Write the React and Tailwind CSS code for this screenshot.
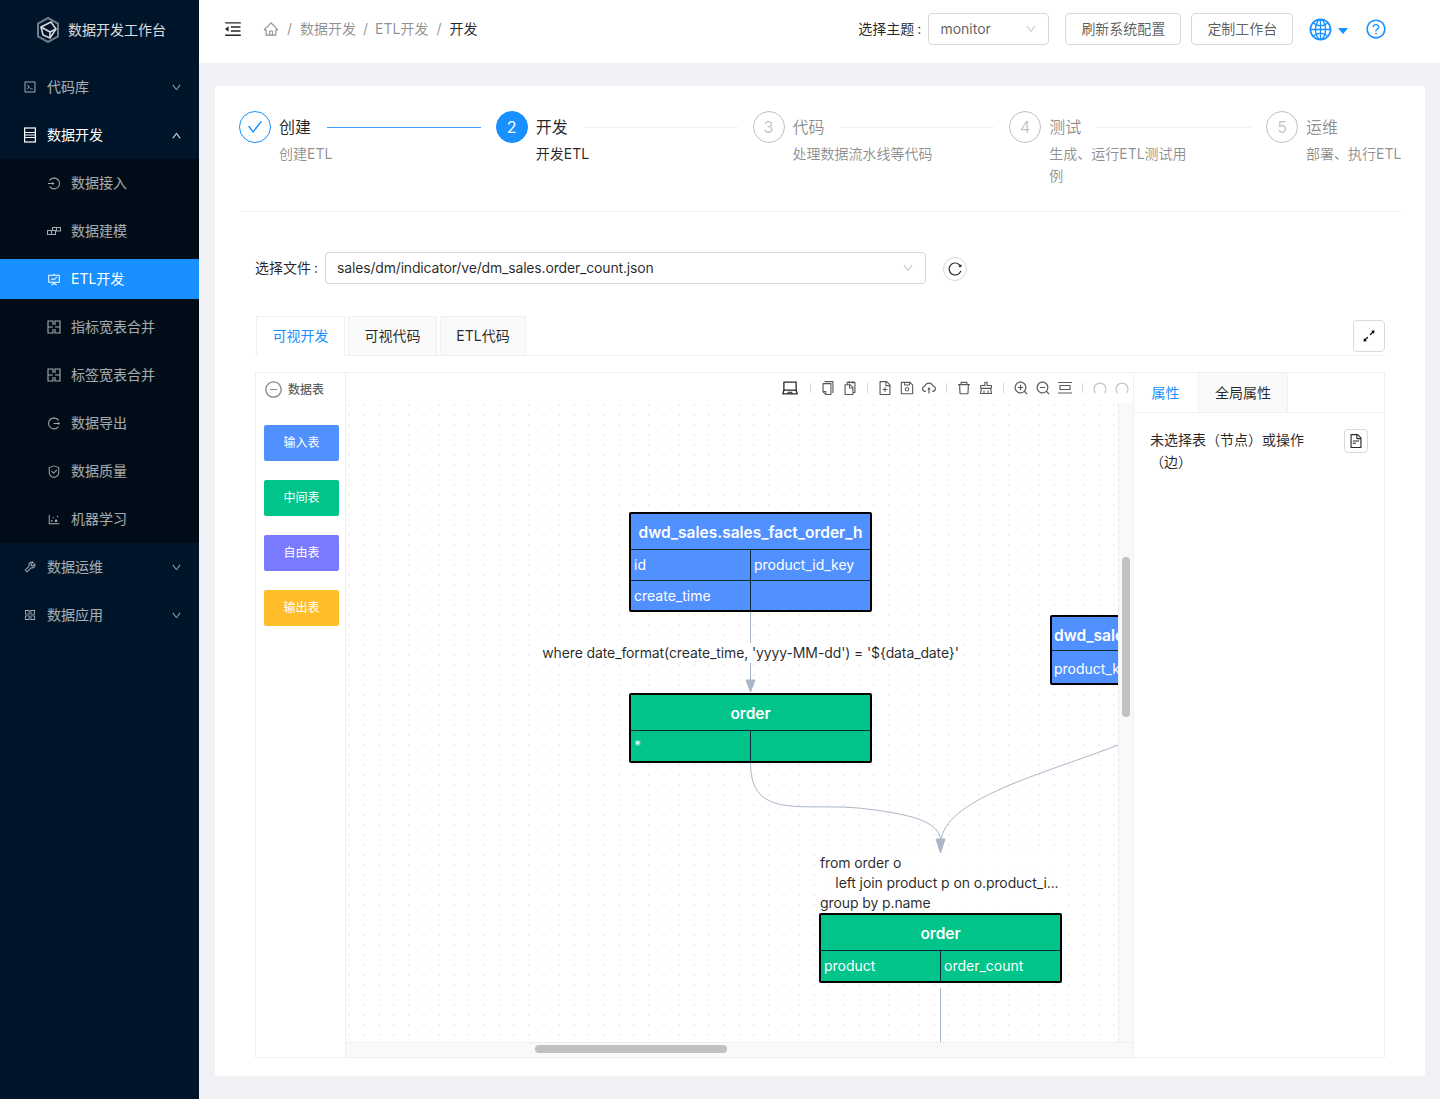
import {
    AiOutlineAppstore, AiOutlineArrowsAlt, AiOutlineCheck, AiOutlineClear, AiOutlineCloudUpload, AiOutlineCode,
    AiOutlineCopy, AiOutlineDelete, AiOutlineDown, AiOutlineFileText, AiOutlineFundProjectionScreen, AiOutlineGlobal,
    AiOutlineHome, AiOutlineLaptop, AiOutlineLogin, AiOutlineLogout, AiOutlineMenuFold, AiOutlineMinusCircle,
    AiOutlineQuestionCircle, AiOutlineReload, AiOutlineSafety, AiOutlineSave, AiOutlineSnippets, AiOutlineTool,
    AiOutlineUp, AiOutlineZoomIn, AiOutlineZoomOut, AiOutlineDotChart, AiOutlineFileAdd, AiFillCaretDown,
} from "react-icons/ai";

const Logo = () => (
    <svg width="24" height="26" viewBox="0 0 24 26" fill="none" stroke="#d5dae0" strokeWidth="1.6">
        <path d="M12 1l10 5.500v13L12 25 2 19.500v-13z" stroke="#6f7d8c" strokeWidth="2"/>
        <path d="M5 10l10-5 5 7-6 9-7-3z"/>
        <path d="M5 10l9 5 6-3M14 15v6"/>
    </svg>
);

const DbIcon = () => (
    <svg width="14" height="16" viewBox="0 0 14 16" fill="none" stroke="currentColor" strokeWidth="1.2">
        <rect x="1.600" y="1" width="10.800" height="14"/>
        <path d="M1.600 5.500h10.800M1.600 8h10.800M1.600 10.500h10.800"/>
    </svg>
);

const ModelIcon = () => (
    <svg width="14" height="14" viewBox="0 0 14 14" fill="none" stroke="currentColor" strokeWidth="1.100">
        <path d="M.5 6.500h8v4h-8zM4.500 6.500v4M5.500 6.500v-3h8v3.500h-5M9.500 3.500v3"/>
    </svg>
);

const MergeIcon = () => (
    <svg width="14" height="14" viewBox="0 0 14 14" fill="none" stroke="currentColor" strokeWidth="1.100">
        <path d="M6 5V1H1v12h5V9M1 7h5M8 5V1h5v12H8V9M8 7h5"/>
    </svg>
);

const CenterIcon = () => (
    <svg width="16" height="14" viewBox="0 0 16 14" fill="none" stroke="currentColor" strokeWidth="1.100">
        <path d="M1 1.500h14M3 4.500h10v4H3zM1 12h14"/>
    </svg>
);

const ArcIcon = () => (
    <svg width="16" height="14" viewBox="0 0 16 14" fill="none" stroke="#c4c4c4" strokeWidth="1.200">
        <path d="M3.500 12A6 6 0 1 1 12.500 12"/>
    </svg>
);

const menuTop = [
    {label: "代码库", icon: <AiOutlineCode size={16}/>},
];
const subMenu = [
    {label: "数据接入", icon: <AiOutlineLogin size={17}/>},
    {label: "数据建模", icon: <ModelIcon/>},
    {label: "ETL开发", icon: <AiOutlineFundProjectionScreen size={17}/>, active: true},
    {label: "指标宽表合并", icon: <MergeIcon/>},
    {label: "标签宽表合并", icon: <MergeIcon/>},
    {label: "数据导出", icon: <AiOutlineLogout size={17}/>},
    {label: "数据质量", icon: <AiOutlineSafety size={17}/>},
    {label: "机器学习", icon: <AiOutlineDotChart size={17}/>},
];
const menuBottom = [
    {label: "数据运维", icon: <AiOutlineTool size={16}/>},
    {label: "数据应用", icon: <AiOutlineAppstore size={16}/>},
];

const steps = [
    {no: 1, title: "创建", desc: "创建ETL", state: "done"},
    {no: 2, title: "开发", desc: "开发ETL", state: "active"},
    {no: 3, title: "代码", desc: "处理数据流水线等代码"},
    {no: 4, title: "测试", desc: "生成、运行ETL测试用例"},
    {no: 5, title: "运维", desc: "部署、执行ETL", last: true},
];

function MenuRow({item, open, bright}) {
    return (
        <div className={`flex items-center h-12 pl-[23px] pr-[17px] text-sm ${bright ? "text-white" : "text-white/65"}`}>
            <span className="w-[14px] mr-[10px] flex justify-center">{item.icon}</span>
            <span className="flex-1">{item.label}</span>
            {open ? <AiOutlineUp size={11}/> : <AiOutlineDown size={11}/>}
        </div>
    );
}

function Sidebar() {
    return (
        <aside className="w-[199px] shrink-0 bg-[#001529]">
            <div className="h-[63px] flex items-center pl-9 pb-[3px] text-sm text-white/85">
                <Logo/>
                <span className="ml-[8px]">数据开发工作台</span>
            </div>
            {menuTop.map((item) => <MenuRow key={item.label} item={item}/>)}
            <MenuRow item={{label: "数据开发", icon: <DbIcon/>}} open bright/>
            <div className="bg-[#000c17] h-[384px] py-1">
                {subMenu.map((item) => (
                    <div
                        key={item.label}
                        className={`flex items-center h-10 mb-2 pl-[47px] text-sm ${item.active ? "bg-[#1890ff] text-white" : "text-white/65"}`}>
                        <span className="w-[14px] mr-[10px] flex justify-center">{item.icon}</span>
                        {item.label}
                    </div>
                ))}
            </div>
            {menuBottom.map((item) => <MenuRow key={item.label} item={item}/>)}
        </aside>
    );
}

function Header() {
    return (
        <header className="h-[63px] bg-white flex items-center pl-[24px] pr-[53px] pb-[5px] text-sm">
            <AiOutlineMenuFold size={20} className="text-black/85"/>
            <div className="flex items-center ml-[20px] text-black/45">
                <AiOutlineHome size={16}/>
                <span className="mx-[8px]">/</span>
                <span>数据开发</span>
                <span className="mx-[7px]">/</span>
                <span>ETL开发</span>
                <span className="mx-[8px]">/</span>
                <span className="text-black/85">开发</span>
            </div>
            <div className="flex-1"/>
            <span className="text-black/85">选择主题<span className="ml-[3px]">:</span></span>
            <div className="ml-[7px] w-[121px] h-8 border border-[#d9d9d9] rounded-sm flex items-center justify-between pl-[11px] pr-[11px] text-black/65">
                monitor
                <AiOutlineDown size={12} className="text-black/25"/>
            </div>
            <button className="ml-4 w-[116px] h-8 border border-[#d9d9d9] rounded-sm text-black/65">刷新系统配置</button>
            <button className="ml-[10px] w-[102px] h-8 border border-[#d9d9d9] rounded-sm text-black/65">定制工作台</button>
            <AiOutlineGlobal size={25} className="ml-[15px] text-[#1890ff]"/>
            <AiFillCaretDown size={14} className="ml-[3px] mt-1 text-[#1890ff]"/>
            <AiOutlineQuestionCircle size={22} className="ml-[15px] text-[#1890ff]"/>
        </header>
    );
}

function Steps() {
    return (
        <div className="flex pl-6 pr-6">
            {steps.map((step) => (
                <div key={step.no} className={`flex ${step.last ? "flex-1" : "w-[256.75px] pr-[15px]"}`}>
                    <div className={`w-8 h-8 shrink-0 rounded-full flex items-center justify-center mr-2 border text-base ${
                        step.state === "done" ? "border-[#1890ff] text-[#1890ff]" :
                        step.state === "active" ? "border-[#1890ff] bg-[#1890ff] text-white" : "border-black/25 text-black/25"
                    }`}>
                        {step.state === "done" ? <AiOutlineCheck size={18}/> : step.no}
                    </div>
                    <div className="flex-1 min-w-0">
                        <div className="flex items-center h-8">
                            <span className={`text-base ${step.state ? "text-black/85" : "text-black/45"}`}>{step.title}</span>
                            {!step.last && (
                                <span className={`flex-1 h-px ml-4 ${step.state === "done" ? "bg-[#40a0ff]" : "bg-[#f0f0f0]"}`}/>
                            )}
                        </div>
                        <div className={`text-sm leading-[22px] ${step.last ? "whitespace-nowrap" : "max-w-[140px]"} ${step.state === "active" ? "text-black/85" : "text-black/45"}`}>
                            {step.desc}
                        </div>
                    </div>
                </div>
            ))}
        </div>
    );
}

function TableNode({title, rows, className, bg}) {
    return (
        <div className={`absolute border-2 border-black rounded-[2px] text-white overflow-hidden ${bg} ${className}`}>
            <div className="flex items-center justify-center h-9 pt-[3px] font-semibold text-[15.5px] border-b border-[#0b2b3d] whitespace-nowrap">{title}</div>
            {rows.map((row, index) => (
                <div key={index} className={`flex text-sm h-[30px] leading-[30px] ${index > 0 ? "border-t border-[#0b2b3d]" : ""}`}>
                    <div className="w-[120px] pl-[3px] border-r border-[#0b2b3d]">{row[0]}</div>
                    <div className="flex-1 pl-[3px]">{row[1]}</div>
                </div>
            ))}
        </div>
    );
}

function Toolbar() {
    const cls = "text-[#595959]";
    const Sep = () => <span className="w-px h-[10px] bg-[#d9d9d9] mx-[3px]"/>;
    return (
        <div className="h-[30px] flex items-center justify-end pr-[3px] gap-[6px]">
            <AiOutlineLaptop size={18} className="text-[#262626] mr-[2px]"/>
            <Sep/>
            <AiOutlineCopy size={16} className={cls}/>
            <AiOutlineSnippets size={16} className={cls}/>
            <Sep/>
            <AiOutlineFileAdd size={16} className={cls}/>
            <AiOutlineSave size={16} className={cls}/>
            <AiOutlineCloudUpload size={16} className={cls}/>
            <Sep/>
            <AiOutlineDelete size={16} className={cls}/>
            <AiOutlineClear size={16} className={cls}/>
            <Sep/>
            <AiOutlineZoomIn size={16} className={cls}/>
            <AiOutlineZoomOut size={16} className={cls}/>
            <span className={cls}><CenterIcon/></span>
            <Sep/>
            <ArcIcon/>
            <ArcIcon/>
        </div>
    );
}

function Canvas() {
    return (
        <div className="relative h-[639px] overflow-hidden bg-[radial-gradient(#c4c4c4_0.7px,transparent_0.8px)] bg-[size:15px_10px] bg-[position:-4.500px_-3px]">
            <svg className="absolute left-[1px] top-0" width="771" height="639" fill="none" stroke="#a9b6c6" strokeWidth="1">
                <path d="M403.500 209V280"/>
                <path d="M403.500 360C403.500 420 460 398 520 406C570 412 594 420 594 440"/>
                <path d="M771 342C700 370 594 396 594 440"/>
                <path d="M593.500 585V639"/>
                <path d="M403.500 289l-4.500-12h9z" fill="#a9b6c6"/>
                <path d="M593.500 450l-4.500-14h9z" fill="#a9b6c6"/>
            </svg>
            <div className="absolute left-[196px] top-[240px] w-[417px] text-sm leading-5 tracking-[-0.115px] text-black/85 bg-white whitespace-nowrap text-center">
                {"where date_format(create_time, 'yyyy-MM-dd') = '${data_date}'"}
            </div>
            <TableNode
                title="dwd_sales.sales_fact_order_h"
                rows={[["id", "product_id_key"], ["create_time", ""]]}
                bg="bg-[#5090ff]"
                className="left-[283px] top-[109px] w-[243px]"/>
            <TableNode
                title="order"
                rows={[["*", ""]]}
                bg="bg-[#00c48a]"
                className="left-[283px] top-[290px] w-[243px]"/>
            <div className="absolute left-[474px] top-[450px] text-sm leading-5 tracking-[-0.1px] text-black/85 bg-white/80 whitespace-pre">
                {"from order o\n    left join product p on o.product_i...\ngroup by p.name"}
            </div>
            <TableNode
                title="order"
                rows={[["product", "order_count"]]}
                bg="bg-[#00c48a]"
                className="left-[473px] top-[510px] w-[243px]"/>
            <div className="absolute left-[704px] top-[212px] w-[120px] h-[70px] border-2 border-black rounded-[2px] bg-[#5090ff] text-white">
                <div className="h-[34px] leading-[37px] pl-[2px] font-semibold text-[15.5px] border-b border-[#0b2b3d]">dwd_sales</div>
                <div className="h-[32px] leading-[35px] pl-[2px] text-sm">product_key</div>
            </div>
        </div>
    );
}

function Editor() {
    return (
        <div className="mx-10 mt-[16px] h-[686px] border border-[#f0f0f0] flex">
            <div className="w-[90px] shrink-0 border-r border-[#f0f0f0]">
                <div className="flex items-center h-[33px] pl-[8px] text-xs font-medium text-black/65">
                    <AiOutlineMinusCircle size={19} className="text-[#8c8c8c] mr-[5px]"/>
                    数据表
                </div>
                <div className="flex flex-col gap-[19px] mt-[19px] pl-[8px]">
                    <div className="w-[75px] h-9 rounded-[2px] bg-[#5090ff] text-white text-xs flex items-center justify-center">输入表</div>
                    <div className="w-[75px] h-9 rounded-[2px] bg-[#00c48a] text-white text-xs flex items-center justify-center">中间表</div>
                    <div className="w-[75px] h-9 rounded-[2px] bg-[#7a7aff] text-white text-xs flex items-center justify-center">自由表</div>
                    <div className="w-[75px] h-9 rounded-[2px] bg-[#ffbd2a] text-white text-xs flex items-center justify-center">输出表</div>
                </div>
            </div>
            <div className="w-[788px] shrink-0 border-r border-[#f0f0f0]">
                <Toolbar/>
                <div className="flex">
                    <div className="w-[772px]"><Canvas/></div>
                    <div className="w-[15px] h-[639px] bg-[#f8f9f9] border-l border-[#eeeeee] pt-[154px] flex justify-center">
                        <div className="w-2 h-[160px] rounded bg-[#c1c1c1]"/>
                    </div>
                </div>
                <div className="h-[15px] bg-[#f8f9f9] border-t border-[#eeeeee] pt-[2px] pl-[189px]">
                    <div className="w-[192px] h-2 rounded bg-[#c1c1c1]"/>
                </div>
            </div>
            <div className="flex-1">
                <div className="flex h-[40px] border-b border-[#f0f0f0] text-sm">
                    <div className="w-[63px] flex items-center justify-center text-[#1890ff]">属性</div>
                    <div className="ml-px w-[90px] flex items-center justify-center bg-[#fafafa] border-x border-[#f0f0f0] text-black/85">全局属性</div>
                </div>
                <div className="flex pl-4 pr-4 pt-[16px] text-sm leading-[22px] text-black/85">
                    <div className="w-[160px] flex-1 pr-[30px]">未选择表（节点）或操作（边）</div>
                    <div className="w-6 h-6 shrink-0 border border-[#d9d9d9] rounded-sm flex items-center justify-center">
                        <AiOutlineFileText size={16}/>
                    </div>
                </div>
            </div>
        </div>
    );
}

function App() {
    return (
        <div className="flex h-screen overflow-hidden font-['Inter','Noto_Sans_CJK_SC',sans-serif]">
            <Sidebar/>
            <div className="flex-1 bg-[#f0f2f5]">
                <Header/>
                <div className="ml-4 mr-[15px] mt-[23px] h-[990px] bg-white pt-[25px]">
                    <div className="h-[100px]"><Steps/></div>
                    <div className="ml-[25px] mr-6 h-px bg-[#f0f0f0]"/>
                    <div className="flex items-center mt-10 pl-10 text-sm text-black/85">
                        选择文件<span className="ml-[3px]">:</span>
                        <div className="ml-[7px] w-[601px] h-8 border border-[#d9d9d9] rounded-sm flex items-center justify-between px-[11px] text-black/85">
                            <span className="tracking-[-0.17px]">sales/dm/indicator/ve/dm_sales.order_count.json</span>
                            <AiOutlineDown size={12} className="text-black/25"/>
                        </div>
                        <div className="ml-[17px] mt-[2px] w-6 h-6 rounded-full border border-[#d9d9d9] flex items-center justify-center">
                            <AiOutlineReload size={16}/>
                        </div>
                    </div>
                    <div className="flex items-end mt-8 mx-10 h-10 border-b border-[#f0f0f0] text-sm relative">
                        <div className="ml-px w-[89px] h-10 flex items-center justify-center border border-[#f0f0f0] border-b-white text-[#1890ff] -mb-px">可视开发</div>
                        <div className="ml-[3px] w-[89px] h-10 flex items-center justify-center bg-[#fafafa] border border-[#f0f0f0] text-black/85 -mb-px">可视代码</div>
                        <div className="ml-[3px] w-[86px] h-10 flex items-center justify-center bg-[#fafafa] border border-[#f0f0f0] text-black/85 -mb-px">ETL代码</div>
                        <div className="ml-auto mb-[3px] w-8 h-8 border border-[#d9d9d9] rounded-sm flex items-center justify-center">
                            <AiOutlineArrowsAlt size={16}/>
                        </div>
                    </div>
                    <Editor/>
                </div>
            </div>
        </div>
    );
}

export default App;
